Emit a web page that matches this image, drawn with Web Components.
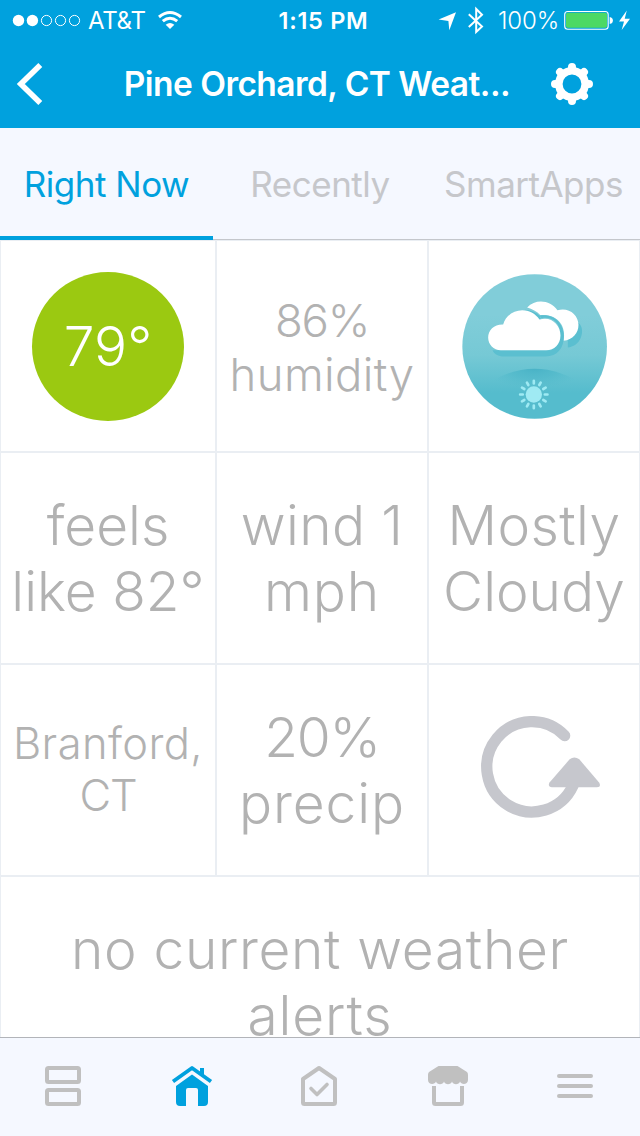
<!DOCTYPE html>
<html lang="en">
<head>
<meta charset="utf-8">
<title>Pine Orchard, CT Weather</title>
<style>
html,body{margin:0;height:100%;overflow:hidden}
body{font-family:Inter,"Liberation Sans",sans-serif;background:#fff}
</style>
</head>
<body>
<weather-app></weather-app>
<script>
function define(name, html) {
  const t = document.createElement('template');
  t.innerHTML = html;
  customElements.define(name, class extends HTMLElement {
    constructor() {
      super();
      this.attachShadow({mode: 'open'}).append(t.content.cloneNode(true));
    }
  });
}

define('status-bar', `
<style>
:host{display:flex;height:40px;color:#fff;font-size:24px;line-height:40px;white-space:nowrap}
svg{display:block;flex:none}
.side{flex:1;display:flex;align-items:center}
.left{padding-left:12px}
.right{justify-content:flex-end;padding-right:10px}
.carrier{margin:1px 11px 0 7px;width:58px;font-size:24px;letter-spacing:-.3px}
.time{font-weight:600;font-size:23.5px;letter-spacing:.7px;padding:1px 0 0 5px}
.pct{width:60px;margin:1px 6px 0 14px;font-size:24px;font-weight:300;letter-spacing:-.1px}
</style>
<div class="side left">
<svg width="69" height="40" viewBox="12 0 69 40" fill="none" stroke="#fff"><circle cx="18.5" cy="20.5" r="5.7" fill="#fff" stroke="none"/><circle cx="32.4" cy="20.5" r="5.7" fill="#fff" stroke="none"/><circle cx="46.5" cy="20.5" r="5.1"/><circle cx="60.5" cy="20.5" r="5.1"/><circle cx="74.5" cy="20.5" r="5.1"/></svg>
<span class="carrier">AT&amp;T</span>
<svg width="26" height="40" viewBox="157.500 0 26 40" fill="none" stroke="#fff" stroke-width="3"><path d="M159.500 17Q170.500 8 181.500 17M163.300 21.200Q170.500 15.200 177.700 21.200"/><path d="M166.200 24.800Q170.500 21.200 174.800 24.800L170.500 29Z" fill="#fff" stroke="none"/></svg>
</div>
<span class="time">1:15 PM</span>
<div class="side right">
<svg width="47" height="40" viewBox="437 0 47 40" fill="none"><path d="M456 12.300L449.300 30.300L448.400 20.900L438.600 19.600Z" fill="#fff"/><path d="M468.800 14.200L482 26.500L476.200 32V9L482 14.700L468.800 27" stroke="#fff" stroke-width="2"/></svg>
<span class="pct">100%</span>
<svg width="66" height="40" viewBox="564 0 66 40"><rect x="564.700" y="11.500" width="43.500" height="17.700" rx="3" fill="none" stroke="#fff" stroke-width="1.100"/><rect x="566" y="12.800" width="41" height="15" rx="1.800" fill="#4cd964"/><path d="M609.700 17Q612.900 17.500 612.900 20.500T609.700 24Z" fill="#fff"/><path d="M626.800 10.400L619 21.400H624L621.700 30L630 18.700H624.700Z" fill="#fff"/></svg>
</div>`);

define('nav-header', `
<style>
:host{display:grid;grid-template-columns:118px 1fr 122px;height:88px;align-items:center;color:#fff}
svg{display:block}
h1{margin:0;padding-right:2px;font-size:33.5px;font-weight:600;line-height:88px;letter-spacing:-.55px;text-align:center;white-space:nowrap}
</style>
<svg width="118" height="88" viewBox="0 40 118 88" fill="none" stroke="#fff" stroke-width="5.600"><path d="M40.300 65L20.800 84L40.300 103"/></svg>
<h1><slot></slot></h1>
<svg width="122" height="88" viewBox="518 40 122 88" fill="none" stroke="#fff"><circle cx="572" cy="84" r="13.200" stroke-width="7.600"/><g stroke-width="8" stroke-linecap="round"><path d="M572 67v1M572 101v-1M555 84h1M589 84h-1M560 72l.7.7M584 96l-.7-.7M584 72l-.7.7M560 96l.7-.7"/></g></svg>`);

define('tab-item', `
<style>
:host{display:flex;align-items:center;justify-content:center;box-sizing:border-box;height:112px;font-size:35px;color:#c6c7cb;border-bottom:1px solid #c4c7cc;white-space:nowrap;letter-spacing:-.5px}
:host([selected]){color:#00a1de;border-bottom:4px solid #00a1de}
span{line-height:42px}
:host([selected]) span{padding-top:3px}
</style><span><slot></slot></span>`);

define('tab-strip', `
<style>:host{display:grid;grid-template-columns:213px 214px 213px;background:#f5f8ff}</style><slot></slot>`);

define('tile-line', `
<style>:host{display:block;white-space:nowrap}</style><slot></slot>`);

define('weather-tile', `
<style>
:host{display:flex;flex-direction:column;align-items:center;justify-content:center;box-sizing:border-box;height:212px;border:1px solid #eaeef3;color:#b2b2b2;background:#fff;font-weight:300;font-size:55px;line-height:66px}
:host([size="m"]){font-size:45.500px;line-height:54px;padding-top:3px}
:host([size="s"]){font-size:43.500px;line-height:52px;padding-bottom:2px}
:host([wide]){grid-column:1/-1}
</style><slot></slot>`);

define('temp-badge', `
<style>:host{display:flex;align-items:center;justify-content:center;width:152px;height:149px;border-radius:50%;background:#9bc911;color:#fff}</style><slot></slot>`);

define('cloud-icon', `
<style>:host{display:block;padding-left:1px}svg{display:block}</style>
<svg width="145.300" height="145" viewBox="111.500 117.500 436 435">
<defs>
<linearGradient id="sky" x1="0" y1="0" x2="0" y2="1"><stop offset=".28" stop-color="#81cdd9"/><stop offset=".56" stop-color="#76c9d5"/><stop offset=".82" stop-color="#55bccd"/></linearGradient>
<radialGradient id="hill" gradientUnits="userSpaceOnUse" cx="329" cy="400" r="150" gradientTransform="translate(0 240) scale(1 .4)"><stop offset="0" stop-color="#48b2c6"/><stop offset=".5" stop-color="#4fb8ca" stop-opacity=".7"/><stop offset="1" stop-color="#55bccd" stop-opacity="0"/></radialGradient>
</defs>
<circle cx="329.500" cy="335" r="217" fill="url(#sky)"/>
<path d="M178 455Q250 402 329 402T482 455V470H178Z" fill="url(#hill)"/>
<path d="M461 264C474 275 474 294 468 309C461 327 445 337 429 338V300Z" fill="#5bbfd0"/>
<path d="M307 218C333 190 377 196 398 226C431 216 461 239 461 270C461 296 444 315 416 318C426 274 397 236 347 241C336 230 322 222 307 218Z" fill="#fff"/>
<path d="M203 346H378C410 330 414 285 394 262C380 249 365 247 350 250L344 242C391 235 417 268 417 306C417 340 398 365 362 365H238C220 365 207 356 203 346Z" fill="#5bbfd0"/>
<path d="M300 225Q325 226 345 243L350 260L330 250Z" fill="#5bbfd0"/>
<path d="M228 346C206 346 190 329 190 308C190 286 208 268 235 269C250 219 315 211 344 254C379 243 407 269 407 302C407 329 388 346 364 346Z" fill="#fff"/>
<circle cx="327" cy="479" r="24.500" fill="#9feaf3"/>
<g stroke="#9feaf3" stroke-width="8" stroke-linecap="round"><path d="M327 438v8M327 512v8M286 479h8M360 479h8M306.500 443.500l4 7M343.500 507.500l4 7M291.500 458.500l7 4M355.500 495.500l7 4M362.500 458.500l-7 4M298.500 495.500l-7 4M347.500 443.500l-4 7M310.500 507.500l-4 7"/></g>
</svg>`);

define('refresh-icon', `
<style>:host{display:block;padding:0 0 5px 14px}svg{display:block}</style>
<svg width="119.300" height="102.300" viewBox="170 167 358 307">
<path d="M421 226A135.500 135.500 0 1 0 446 376" fill="none" stroke="#c6c7cd" stroke-width="34" stroke-linecap="round"/>
<path d="M436 297Q450 286 465 297L525 367Q531 380 518 381H383Q370 380 375 367Z" fill="#c6c7cd"/>
</svg>`);

define('bottom-bar', `
<style>
:host{display:grid;grid-template-columns:repeat(5,1fr);height:98px;border-top:1px solid #b2b4b9;background:#f5f8ff;place-items:center}
svg{display:block;width:48px;height:48px;fill:none;stroke:#c0c0c0;stroke-width:4;stroke-linecap:round;stroke-linejoin:round}
</style>
<svg viewBox="40 1063 48 48"><rect x="47" y="1068" width="32" height="14" rx="1.500"/><rect x="47" y="1090" width="32" height="14" rx="1.500"/></svg>
<svg viewBox="168 1063 48 48"><path d="M173 1081.500L192 1068L211 1081.500" stroke="#00a1de" stroke-width="3.800" stroke-linecap="butt"/><path d="M200 1068H204V1075.500L200 1073Z" fill="#00a1de" stroke="none"/><path d="M192 1074.500L208 1086V1102Q208 1106 204 1106H198V1090Q198 1088 196 1088H188Q186 1088 186 1090V1106H180Q176 1106 176 1102V1086Z" fill="#00a1de" stroke="none"/></svg>
<svg viewBox="296 1063 48 48"><path d="M319 1068L335 1079V1102.500Q335 1104 333.500 1104H304.500Q303 1104 303 1102.500V1079Z"/><path d="M311 1088.500L317 1094.500L327 1084.500" stroke-width="3.600"/></svg>
<svg viewBox="424 1063 48 48"><path d="M438.500 1066H457.500L467 1072Q468 1073 468 1075V1080C468 1085 461 1085 460 1081.500C459 1085 453 1085 452 1081.500C451 1085 445 1085 444 1081.500C443 1085 437 1085 436 1081.500C435 1085 428 1085 428 1080V1075Q428 1073 429 1072Z" fill="#c0c0c0" stroke="none"/><path d="M434 1086V1102.500Q434 1104 435.500 1104H460.500Q462 1104 462 1102.500V1086" stroke-linecap="butt"/></svg>
<svg viewBox="552 1063 48 48"><path d="M559 1076h32M559 1086h32M559 1096h32"/></svg>`);

define('weather-app', `
<style>
:host{display:flex;flex-direction:column;width:640px;height:1136px;overflow:hidden}
header{background:#00a1de;flex:none}
tab-strip,bottom-bar{flex:none}
main{flex:1;min-height:0;overflow:hidden;display:grid;grid-template-columns:216px 212px 212px;grid-auto-rows:212px}
.t1{letter-spacing:-1.200px}
.w1{letter-spacing:.4px}
.w2{letter-spacing:.9px}
</style>
<header><status-bar></status-bar><nav-header>Pine Orchard, CT Weat...</nav-header></header>
<tab-strip><tab-item selected>Right Now</tab-item><tab-item>Recently</tab-item><tab-item>SmartApps</tab-item></tab-strip>
<main>
<weather-tile><temp-badge>79°</temp-badge></weather-tile>
<weather-tile size="m"><tile-line class="t1">86%</tile-line><tile-line class="w1">humidity</tile-line></weather-tile>
<weather-tile><cloud-icon></cloud-icon></weather-tile>
<weather-tile><tile-line>feels</tile-line><tile-line>like 82°</tile-line></weather-tile>
<weather-tile><tile-line class="w1">wind 1</tile-line><tile-line class="w2">mph</tile-line></weather-tile>
<weather-tile><tile-line class="w1">Mostly</tile-line><tile-line>Cloudy</tile-line></weather-tile>
<weather-tile size="s"><tile-line class="w1">Branford,</tile-line><tile-line class="t1">CT</tile-line></weather-tile>
<weather-tile><tile-line class="t1">20%</tile-line><tile-line class="w2">precip</tile-line></weather-tile>
<weather-tile><refresh-icon></refresh-icon></weather-tile>
<weather-tile wide><tile-line style="letter-spacing:.68px">no current weather</tile-line><tile-line class="w2">alerts</tile-line></weather-tile>
</main>
<bottom-bar></bottom-bar>`);
</script>
</body>
</html>
